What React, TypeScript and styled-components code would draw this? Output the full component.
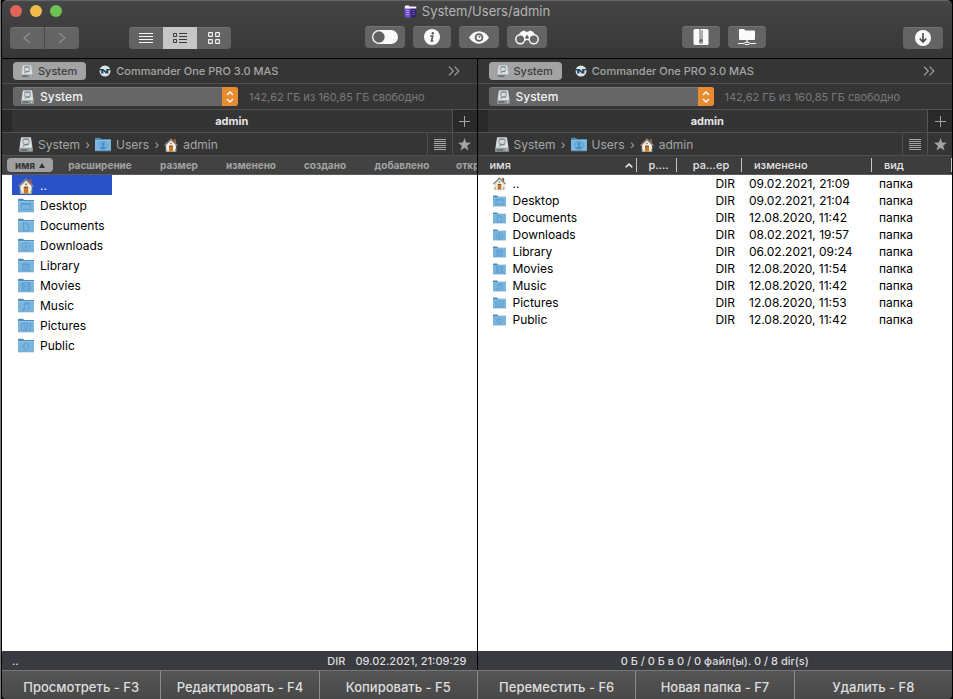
import React from "react";
import styled, { createGlobalStyle, css } from "styled-components";

const GlobalStyle = createGlobalStyle`
  * { box-sizing: border-box; }
  html, body, #root { height: 100%; margin: 0; }
  body {
    background: #000;
    font-family: Inter, "Liberation Sans", sans-serif;
    font-size: 12px;
    color: #a6a6a6;
  }
  button, select {
    font: inherit;
    color: inherit;
    margin: 0;
    padding: 0;
    border: 0;
    background: none;
  }
  svg { display: block; flex: none; }
`;

const Window = styled.div`
  display: flex;
  flex-direction: column;
  height: 100vh;
  padding: 0 1px;
  border-left: 1px solid #777;
  overflow: hidden;
`;

const Header = styled.header`
  flex: none;
  background: linear-gradient(#454545, #363636);
  border-top: 1px solid #666;
  border-bottom: 1px solid #000;
  border-radius: 5px 5px 0 0;
`;

const TitleBar = styled.div`
  display: grid;
  grid-template-columns: 1fr auto 1fr;
  align-items: center;
  height: 20px;
  padding: 0 8px;
`;

const Lights = styled.div`
  display: flex;
  gap: 8px;
`;

const Light = styled.button<{ $color: string }>`
  width: 12px;
  height: 12px;
  border-radius: 50%;
  background: ${(p) => p.$color};
`;

const Title = styled.h1`
  display: flex;
  align-items: center;
  gap: 5px;
  margin: 0;
  font-size: 13px;
  line-height: 16px;
  font-weight: 400;
  color: #b4b4b4;
`;

const Toolbar = styled.div`
  display: flex;
  height: 37px;
  padding: 5px 9px 0 8px;
`;

const Spacer = styled.div<{ $grow: number }>`
  flex: ${(p) => p.$grow} 1 0;
`;

const Segments = styled.div`
  display: flex;
  height: 22px;
  margin-top: 1px;
  border-radius: 4px;
  overflow: hidden;
  box-shadow: inset 0 1px 0 #737373;
  background: #646464;
`;

const Segment = styled.button<{ $active?: boolean }>`
  display: flex;
  align-items: center;
  justify-content: center;
  width: 34px;
  color: ${(p) => (p.$active ? "#3a3a3a" : "#f5f5f5")};
  background: ${(p) => (p.$active ? "#c6c6c6" : "transparent")};
`;

const HistoryButton = styled(Segment)`
  color: #8d8d8d;
  & + & {
    width: 35px;
    border-left: 1px solid #4a4a4a;
  }
`;

const ToolGroup = styled.div`
  display: flex;
  gap: 8px;
`;

const ToolButton = styled.button<{ $wide?: boolean; $low?: boolean }>`
  display: flex;
  align-items: center;
  justify-content: center;
  width: ${(p) => (p.$wide ? "40px" : "38px")};
  height: 22px;
  margin-top: ${(p) => (p.$low ? "1px" : "0")};
  border-radius: 4px;
  color: #fafafa;
  background: #646464;
  box-shadow: inset 0 1px 0 #737373;
`;

const Panes = styled.main`
  flex: 1;
  min-height: 0;
  display: grid;
  grid-template-columns: repeat(2, minmax(0, 1fr));
  gap: 1px;
`;

const Pane = styled.section`
  display: flex;
  flex-direction: column;
  min-width: 0;
  min-height: 0;
  background: #353535;
`;

const Bar = styled.div<{ $height: number }>`
  flex: none;
  display: flex;
  align-items: center;
  height: ${(p) => p.$height}px;
  border-bottom: 1px solid #505050;
`;

const BookmarkBar = styled(Bar)`
  padding: 0 17px 0 11px;
  font-weight: 500;
  font-size: 11px;
`;

const Bookmark = styled.button<{ $active?: boolean }>`
  display: flex;
  align-items: center;
  gap: 5px;
  height: 18px;
  padding: 0 9px 0 8px;
  border-radius: 4px;
  white-space: nowrap;
  ${(p) =>
    p.$active
      ? css`
          color: #3c3c3c;
          background: #a3a3a3;
          margin-right: 5px;
        `
      : ""}
`;

const More = styled.button`
  margin-left: auto;
  color: #a0a0a0;
`;

const DriveBar = styled(Bar)`
  padding: 0 11px;
  gap: 11px;
`;

const DriveBox = styled.label`
  display: grid;
  grid-template-columns: 8px 14px 1fr 16px;
  align-items: center;
  width: 225px;
  height: 19px;
  border-radius: 3px;
  overflow: hidden;
  color: #f2f2f2;
  background: #666;
  box-shadow: inset 0 1px 0 #777;

  svg:first-child { grid-column: 2; }
`;

const DriveSelect = styled.select`
  appearance: none;
  height: 19px;
  padding-left: 5px;
  font-weight: 500;
  outline: none;
`;

const Stepper = styled.span`
  display: flex;
  align-items: center;
  justify-content: center;
  height: 19px;
  background: #e98b31;
`;

const FreeSpace = styled.span`
  font-size: 11px;
  line-height: 16px;
  color: #7a7a7a;
  white-space: nowrap;
`;

const TabBar = styled(Bar)`
  padding-left: 10px;
  align-items: stretch;
  background: #292929;
`;

const Tab = styled.button`
  flex: 1;
  font-size: 11px;
  font-weight: 700;
  color: #e6e6e6;
  background: #343434;
  border-right: 1px solid #555;
`;

const SideButton = styled.button<{ $ruled?: boolean }>`
  display: flex;
  align-items: center;
  justify-content: center;
  width: ${(p) => (p.$ruled ? "25px" : "24px")};
  color: #a4a4a4;
  border-left: ${(p) => (p.$ruled ? "1px solid #505050" : "0")};
`;

const PathBar = styled(Bar)`
  align-items: stretch;
`;

const Crumbs = styled.nav`
  flex: 1;
  display: flex;
  align-items: center;
  padding: 1px 0 0 17px;
  line-height: 16px;
`;

const Crumb = styled.a`
  display: flex;
  align-items: center;
  gap: 5px;
  color: #a6a6a6;
  text-decoration: none;
`;

const Chevron = styled.span`
  width: 15px;
  text-align: center;
`;

const SortBar = styled(Bar)`
  padding-left: 5px;
  gap: 6px;
  overflow: hidden;
  background: #424242;
  border-color: #5c5c5c;
`;

const SortButton = styled.button<{ $active?: boolean; $width: number }>`
  flex: none;
  display: flex;
  align-items: center;
  justify-content: center;
  gap: 4px;
  width: ${(p) => p.$width}px;
  height: 14px;
  border-radius: 4px;
  font-size: 10px;
  font-weight: 700;
  color: ${(p) => (p.$active ? "#333" : "#a3a3a3")};
  background: ${(p) => (p.$active ? "#a0a0a0" : "none")};
`;

const LastSortButton = styled(SortButton)`
  justify-content: flex-start;
  padding-left: 11px;
`;

const Listing = styled.div`
  flex: 1;
  min-height: 0;
  overflow: hidden;
  color: #000;
  background: #fff;
`;

const BriefList = styled.ul`
  list-style: none;
  width: 100px;
  margin: 0 0 0 10px;
  padding: 0;
`;

const BriefItem = styled.li<{ $selected?: boolean }>`
  display: flex;
  align-items: center;
  gap: 6px;
  height: 20px;
  padding: 1px 0 0 6px;
  line-height: 19px;
  color: ${(p) => (p.$selected ? "#fff" : "#000")};
  background: ${(p) => (p.$selected ? "#2952c8" : "none")};
`;

const FileTable = styled.table`
  width: 100%;
  table-layout: fixed;
  border-collapse: separate;
  border-spacing: 0;
  text-align: left;
  white-space: nowrap;
`;

const Col = styled.col<{ $width?: number }>`
  width: ${(p) => (p.$width ? `${p.$width}px` : "auto")};
`;

const HeadCell = styled.th`
  height: 19px;
  padding: 2px 0;
  font-size: 11px;
  font-weight: 500;
  line-height: 14px;
  color: #e4e4e4;
  background: #3d3d3d;
  border-bottom: 1px solid #5c5c5c;
`;

const HeadButton = styled.button`
  display: flex;
  align-items: center;
  justify-content: space-between;
  width: 100%;
  height: 14px;
  padding: 0 3px 0 12px;
  border-right: 1px solid #c4c4c4;
`;

const CenteredHead = styled(HeadButton)`
  justify-content: center;
  padding: 0 0 0 4px;
`;

const Cell = styled.td<{ $end?: boolean }>`
  height: 17px;
  padding: 0 7px;
  line-height: 17px;
  text-align: ${(p) => (p.$end ? "right" : "left")};
`;

const NameCell = styled(Cell)`
  padding-left: 15px;
`;

const FileName = styled.span`
  display: flex;
  align-items: center;
  gap: 7px;
`;

const Status = styled.footer<{ $centered?: boolean }>`
  flex: none;
  display: flex;
  align-items: center;
  justify-content: ${(p) => (p.$centered ? "center" : "flex-start")};
  gap: 10px;
  height: 19px;
  padding: 0 10px;
  font-size: 11px;
  font-weight: 500;
  color: #dcdcdc;
  background: #3a3b40;
`;

const Push = styled.span`
  margin-right: auto;
`;

const Commands = styled.div`
  flex: none;
  display: grid;
  grid-template-columns: repeat(6, 1fr);
  height: 29px;
  border-top: 1px solid #777;
  border-radius: 0 0 4px 4px;
  overflow: hidden;
  background: linear-gradient(#555, #484848);
`;

const Command = styled.button`
  padding-top: 3px;
  font-size: 13px;
  font-weight: 500;
  color: #dedede;
  & + & { border-left: 1px solid #8a8a8a; }
`;

const DiskIcon = ({ size = 13 }: { size?: number }) => (
  <svg width={size} height={size + 1} viewBox="0 0 14 15">
    <path d="M2 .5h10l1.7 11v3H.3v-3z" fill="#b4babd" />
    <path d="M2.3.6h9.4l1.3 10H1z" fill="#dfe3e5" />
    <ellipse cx="7" cy="5" rx="3.9" ry="3.7" fill="#a3acb1" />
    <ellipse cx="7" cy="4.8" rx="2.4" ry="2.2" fill="#d3d9dc" />
    <path d="M3.6 2.2h6.8" stroke="#6f787d" strokeWidth=".9" />
    <path d="M3.8 9.3 7 7.2l2.5.6" fill="none" stroke="#6f787d" strokeWidth="1" />
    <path d="M.3 11.3h13.4v3.2H.3z" fill="#8c9498" />
    <path d="M2 13h6" stroke="#4b5357" strokeWidth="1" />
    <circle cx="11.5" cy="12.9" r=".7" fill="#e8eef0" />
  </svg>
);

const HomeIcon = ({ size = 14 }: { size?: number }) => (
  <svg width={size} height={size} viewBox="0 0 14 14">
    <path d="M10 1h2v4h-2z" fill="#9a5d32" />
    <path d="M2 7 7 2l5 5v6.5H2z" fill="#f2efe9" stroke="#bbb4a8" strokeWidth=".6" />
    <path d="M.5 7.5 7 1.3l6.5 6.2" fill="none" stroke="#8b8179" strokeWidth="1.5" />
    <path d="M5 8h4v5.5H5z" fill="#c77925" />
    <path d="M5.2 8h3.6" stroke="#7c4719" />
    <circle cx="7" cy="5.5" r=".8" fill="#59636c" />
    <path d="M2.4 11v2.4M11.6 11v2.4" stroke="#7d9c58" />
  </svg>
);

const glyphs: Record<string, React.ReactNode> = {
  Desktop: <path d="M4 5.5h9v6H4zM4 6.5h9" />,
  Documents: <path d="M6 4.5h3.2l2 2v6H6zM9 4.5v2.3h2.2" />,
  Downloads: <path d="M8.5 4.5a4 4 0 1 0 .01 0M8.5 6.3v4M6.8 8.7l1.7 1.7 1.7-1.7" />,
  Library: <path d="M4.5 6.5 8.5 4.3l4 2.2zM5.5 7v4.5M7.5 7v4.5M9.5 7v4.5M11.5 7v4.5M4.3 12.2h8.4" />,
  Movies: <path d="M4.5 4.7h8v7.5h-8zM6.5 4.7v7.5M10.5 4.7v7.5M6.5 8.4h4M4.5 6.6h2M4.5 10.3h2M10.5 6.6h2M10.5 10.3h2" />,
  Music: <path d="M7 11V5.3l4.7-1V10M7 6.5l4.7-1M5.3 11.2h1.4v1H5.3zM10 10.2h1.4v1H10z" />,
  Pictures: <path d="M4 6h2.5l.8-1h2.4l.8 1H13v6H4zM8.5 7.2a1.8 1.8 0 1 0 .01 0" />,
  Public: <path d="m8.5 4.5 1.5 2-.2.6.7-.1 2 1.5-2 1.5-.7-.1.2.6-1.5 2-1.5-2 .2-.6-.7.1-2-1.5 2-1.5.7.1-.2-.6z" />,
  Users: (
    <>
      <circle cx="8.5" cy="8.2" r="4.2" />
      <circle cx="8.5" cy="7" r="1.5" fill="#4788be" />
      <path d="M5.8 11c1-2.2 4.4-2.2 5.4 0-1.5 1.4-4 1.4-5.4 0z" fill="#4788be" />
    </>
  ),
};

const FolderIcon = ({ kind, small }: { kind: string; small?: boolean }) => (
  <svg width={small ? 13 : 16} height={small ? 12 : 15} viewBox="0 0 16 15" preserveAspectRatio="none">
    <path d="M0 2.2C0 1 .3.7 1 .7h4l1.2 1.4H16v4H0z" fill="#4c87ad" />
    <path d="M0 3h16v10.8H0z" fill="#7ab5de" />
    <path d="M0 3.4h16" stroke="#95c8e9" strokeWidth=".8" />
    <path d="M0 13.8h16" stroke="#699dc0" strokeWidth=".8" />
    <g transform="translate(-.5 0)" fill="none" stroke="#5499d2" strokeWidth=".8">
      {glyphs[kind]}
    </g>
  </svg>
);

const LinesIcon = () => (
  <svg width="14" height="12" viewBox="0 0 14 12" stroke="currentColor">
    <path d="M0 1.5h14M0 4.5h14M0 7.5h14M0 10.5h14" />
  </svg>
);

const DetailIcon = () => (
  <svg width="14" height="12" viewBox="0 0 14 12" fill="none" stroke="currentColor">
    <path d="M.5 1.5h3v3h-3zM.5 7.5h3v3h-3zM6 1.5h8M6 4.5h8M6 7.5h8M6 10.5h8" />
  </svg>
);

const GridIcon = () => (
  <svg width="12" height="12" viewBox="0 0 12 12" fill="none" stroke="currentColor" strokeWidth="1.1">
    <rect x=".6" y=".6" width="3.8" height="3.8" rx=".5" />
    <rect x="7.6" y=".6" width="3.8" height="3.8" rx=".5" />
    <rect x=".6" y="7.6" width="3.8" height="3.8" rx=".5" />
    <rect x="7.6" y="7.6" width="3.8" height="3.8" rx=".5" />
  </svg>
);

const ArrowIcon = ({ forward }: { forward?: boolean }) => (
  <svg width="8" height="12" viewBox="0 0 8 12" fill="none" stroke="currentColor" strokeWidth="1.4">
    <path d={forward ? "m1 1 6 5-6 5" : "M7 1 1 6l6 5"} />
  </svg>
);

const AppIcon = () => (
  <svg width="13" height="13" viewBox="0 0 13 13">
    <path d="M.8 1.5 1.6.4h3.2l.8 1h6.6v3H.8z" fill="#f7f3ff" />
    <path d="M.6 3.5h6v9H1.8q-1 0-1.1-1z" fill="#7650d8" />
    <path d="M6.6 3.5h5.8l-.2 8q0 1-1.2 1H6.6z" fill="#34246f" />
    <path d="M2 5.5h3M2 7.5h3M2 9.5h3" stroke="#b59bf5" strokeWidth=".8" />
    <path d="M8 5.5h3M8 7.5h3M8 9.5h3" stroke="#6d5cb5" strokeWidth=".8" />
  </svg>
);

const ToggleIcon = () => (
  <svg width="26" height="14" viewBox="0 0 26 14">
    <rect width="26" height="14" rx="7" fill="currentColor" />
    <circle cx="7" cy="7" r="5.7" fill="#606060" />
  </svg>
);

const InfoIcon = () => (
  <svg width="16" height="16" viewBox="0 0 16 16">
    <circle cx="8" cy="8" r="8" fill="currentColor" />
    <circle cx="8.8" cy="4.3" r="1.2" fill="#555" />
    <path d="M6.2 7h2.5l-1.2 5h1.8" fill="none" stroke="#555" strokeWidth="1.6" />
  </svg>
);

const EyeIcon = () => (
  <svg width="20" height="13" viewBox="0 0 20 13">
    <path d="M0 6.5C5-1.7 15-1.7 20 6.5 15 14.7 5 14.7 0 6.5z" fill="currentColor" />
    <circle cx="10" cy="6.5" r="4.3" fill="#606060" />
    <circle cx="10" cy="6.5" r="2.5" fill="currentColor" />
    <circle cx="10.5" cy="5.8" r="1" fill="#606060" />
  </svg>
);

const BinocularsIcon = () => (
  <svg width="24" height="15" viewBox="0 0 24 15">
    <path d="M1 8 6 1.8 9 .4l2 1.3h2L15 .4l3 1.4L23 8l-4 2-6-3h-2L5 10z" fill="currentColor" />
    <circle cx="5.3" cy="9.3" r="4.5" fill="#666" stroke="currentColor" strokeWidth="1.5" />
    <circle cx="18.7" cy="9.3" r="4.5" fill="#666" stroke="currentColor" strokeWidth="1.5" />
    <circle cx="12" cy="6.5" r="1.2" fill="#606060" />
    <path d="M10 9.5h4" stroke="currentColor" strokeWidth="1.5" />
  </svg>
);

const ArchiveIcon = () => (
  <svg width="16" height="16" viewBox="0 0 16 16">
    <rect x=".5" width="15" height="16" rx="1.5" fill="currentColor" />
    <path d="M7 .5v10" stroke="#606060" strokeWidth="2" strokeDasharray="1 1" />
    <path d="M9 1.5v9" stroke="#606060" strokeWidth="2" strokeDasharray="1 1" />
    <rect x="6.2" y="10" width="3.6" height="4.8" rx="1.5" fill="#606060" />
    <path d="M7.2 13.3h1.6" stroke="currentColor" />
  </svg>
);

const NetworkIcon = () => (
  <svg width="18" height="16" viewBox="0 0 18 16">
    <path d="M1 1q0-1 1-1h4l1.5 1.5H16q1 0 1 1V10q0 1-1 1H2q-1 0-1-1z" fill="currentColor" />
    <path d="M9 11v2M0 14.5h6M12 14.5h6" stroke="currentColor" strokeWidth="1.2" />
    <ellipse cx="9" cy="14.4" rx="3" ry="1.2" fill="none" stroke="currentColor" />
  </svg>
);

const DownloadIcon = () => (
  <svg width="16" height="16" viewBox="0 0 16 16">
    <circle cx="8" cy="8" r="8" fill="currentColor" />
    <path d="M8 3v9M4.8 8.7 8 12l3.2-3.3" fill="none" stroke="#4d4d4d" strokeWidth="1.7" />
  </svg>
);

const CommanderIcon = () => (
  <svg width="12" height="12" viewBox="0 0 12 12">
    <circle cx="6" cy="6" r="5.5" fill="#dce4e8" />
    <path d="M0 4h4.6l2.6 2.6V4H12v1.2H9.4V8.4H6.8L4.4 6v2.4H2.2V5.4H0z" fill="#26485e" />
  </svg>
);

const StarIcon = () => (
  <svg width="13" height="13" viewBox="0 0 13 13" fill="currentColor">
    <path d="m6.5 0 1.6 4.6 4.9.1-3.9 3 1.4 4.8-4-2.8-4 2.8 1.4-4.8L0 4.7l4.9-.1z" />
  </svg>
);

const ListIcon = () => (
  <svg width="12" height="11" viewBox="0 0 12 11" stroke="currentColor">
    <path d="M0 .5h12M0 2.5h12M0 4.5h12M0 6.5h12M0 8.5h12M0 10.5h12" />
  </svg>
);

const folders = ["Desktop", "Documents", "Downloads", "Library", "Movies", "Music", "Pictures", "Public"];
const dates = [
  "09.02.2021, 21:04",
  "12.08.2020, 11:42",
  "08.02.2021, 19:57",
  "06.02.2021, 09:24",
  "12.08.2020, 11:54",
  "12.08.2020, 11:42",
  "12.08.2020, 11:53",
  "12.08.2020, 11:42",
];
const rows = [{ name: "..", date: "09.02.2021, 21:09" }, ...folders.map((name, i) => ({ name, date: dates[i] }))];

const sortColumns: [string, number][] = [
  ["расширение", 82],
  ["размер", 64],
  ["изменено", 68],
  ["создано", 68],
  ["добавлено", 74],
];

const commands = [
  "Просмотреть - F3",
  "Редактировать - F4",
  "Копировать - F5",
  "Переместить - F6",
  "Новая папка - F7",
  "Удалить - F8",
];

const PaneHeader = () => (
  <>
    <BookmarkBar $height={25}>
      <Bookmark $active>
        <DiskIcon size={12} />
        System
      </Bookmark>
      <Bookmark>
        <CommanderIcon />
        Commander One PRO 3.0 MAS
      </Bookmark>
      <More aria-label="Ещё">
        <svg width="12" height="10" viewBox="0 0 12 10" fill="none" stroke="currentColor" strokeWidth="1.2">
          <path d="m1 .7 4.3 4.3L1 9.3M6.5.7 10.8 5 6.5 9.3" />
        </svg>
      </More>
    </BookmarkBar>
    <DriveBar $height={26}>
      <DriveBox>
        <DiskIcon />
        <DriveSelect aria-label="Диск" defaultValue="System">
          <option>System</option>
        </DriveSelect>
        <Stepper>
          <svg width="8" height="12" viewBox="0 0 8 12" fill="none" stroke="#fff" strokeWidth="1.3">
            <path d="m1 4 3-3 3 3M1 8l3 3 3-3" />
          </svg>
        </Stepper>
      </DriveBox>
      <FreeSpace>142,62 ГБ из 160,85 ГБ свободно</FreeSpace>
    </DriveBar>
    <TabBar $height={23}>
      <Tab>admin</Tab>
      <SideButton aria-label="Новая вкладка">
        <svg width="11" height="11" viewBox="0 0 11 11" stroke="currentColor">
          <path d="M5.5 0v11M0 5.5h11" />
        </svg>
      </SideButton>
    </TabBar>
    <PathBar $height={23}>
      <Crumbs>
        <Crumb href="#system">
          <DiskIcon size={14} />
          System
        </Crumb>
        <Chevron>›</Chevron>
        <Crumb href="#users">
          <FolderIcon kind="Users" />
          Users
        </Crumb>
        <Chevron>›</Chevron>
        <Crumb href="#admin">
          <HomeIcon />
          admin
        </Crumb>
      </Crumbs>
      <SideButton $ruled aria-label="История">
        <ListIcon />
      </SideButton>
      <SideButton $ruled aria-label="Избранное">
        <StarIcon />
      </SideButton>
    </PathBar>
  </>
);

export default function App() {
  return (
    <>
      <GlobalStyle />
      <Window>
        <Header>
          <TitleBar>
            <Lights>
              <Light $color="#e1645a" aria-label="Закрыть" />
              <Light $color="#f0bb4b" aria-label="Свернуть" />
              <Light $color="#6cc153" aria-label="Развернуть" />
            </Lights>
            <Title>
              <AppIcon />
              System/Users/admin
            </Title>
          </TitleBar>
          <Toolbar>
            <Segments>
              <HistoryButton aria-label="Назад"><ArrowIcon /></HistoryButton>
              <HistoryButton aria-label="Вперёд"><ArrowIcon forward /></HistoryButton>
            </Segments>
            <Spacer $grow={50} />
            <Segments>
              <Segment aria-label="Кратко"><LinesIcon /></Segment>
              <Segment $active aria-label="Подробно"><DetailIcon /></Segment>
              <Segment aria-label="Значки"><GridIcon /></Segment>
            </Segments>
            <Spacer $grow={134} />
            <ToolGroup>
              <ToolButton $wide aria-label="Скрытые файлы"><ToggleIcon /></ToolButton>
              <ToolButton aria-label="Информация"><InfoIcon /></ToolButton>
              <ToolButton $wide aria-label="Просмотр"><EyeIcon /></ToolButton>
              <ToolButton $wide aria-label="Поиск"><BinocularsIcon /></ToolButton>
            </ToolGroup>
            <Spacer $grow={135} />
            <ToolGroup>
              <ToolButton aria-label="Архив"><ArchiveIcon /></ToolButton>
              <ToolButton aria-label="Сеть"><NetworkIcon /></ToolButton>
            </ToolGroup>
            <Spacer $grow={137} />
            <ToolButton $wide $low aria-label="Очередь"><DownloadIcon /></ToolButton>
          </Toolbar>
        </Header>

        <Panes>
          <Pane>
            <PaneHeader />
            <SortBar $height={19}>
              <SortButton $active $width={46}>
                имя
                <svg width="6" height="5" viewBox="0 0 6 5" fill="currentColor"><path d="m3 0 3 5H0z" /></svg>
              </SortButton>
              {sortColumns.map(([label, width]) => (
                <SortButton key={label} $width={width}>{label}</SortButton>
              ))}
              <LastSortButton $width={34}>откр</LastSortButton>
            </SortBar>
            <Listing>
              <BriefList>
                <BriefItem $selected>
                  <HomeIcon size={16} />
                  ..
                </BriefItem>
                {folders.map((name) => (
                  <BriefItem key={name}>
                    <FolderIcon kind={name} />
                    {name}
                  </BriefItem>
                ))}
              </BriefList>
            </Listing>
            <Status>
              <Push>..</Push>
              <span>DIR</span>
              <span>09.02.2021, 21:09:29</span>
            </Status>
          </Pane>

          <Pane>
            <PaneHeader />
            <Listing>
              <FileTable>
                <colgroup>
                  <Col />
                  <Col $width={40} />
                  <Col $width={65} />
                  <Col $width={130} />
                  <Col $width={80} />
                </colgroup>
                <thead>
                  <tr>
                    <HeadCell>
                      <HeadButton>
                        имя
                        <svg width="8" height="5" viewBox="0 0 8 5" fill="none" stroke="currentColor" strokeWidth="1.5">
                          <path d="m.7 4.4 3.3-3.3 3.3 3.3" />
                        </svg>
                      </HeadButton>
                    </HeadCell>
                    <HeadCell><CenteredHead>р....</CenteredHead></HeadCell>
                    <HeadCell><CenteredHead>ра...ер</CenteredHead></HeadCell>
                    <HeadCell><HeadButton>изменено</HeadButton></HeadCell>
                    <HeadCell><HeadButton>вид</HeadButton></HeadCell>
                  </tr>
                </thead>
                <tbody>
                  {rows.map((row) => (
                    <tr key={row.name}>
                      <NameCell>
                        <FileName>
                          {row.name === ".." ? <HomeIcon size={13} /> : <FolderIcon kind={row.name} small />}
                          {row.name}
                        </FileName>
                      </NameCell>
                      <Cell />
                      <Cell $end>DIR</Cell>
                      <Cell>{row.date}</Cell>
                      <Cell>папка</Cell>
                    </tr>
                  ))}
                </tbody>
              </FileTable>
            </Listing>
            <Status $centered>0 Б / 0 Б в 0 / 0 файл(ы). 0 / 8 dir(s)</Status>
          </Pane>
        </Panes>

        <Commands>
          {commands.map((label) => (
            <Command key={label}>{label}</Command>
          ))}
        </Commands>
      </Window>
    </>
  );
}
